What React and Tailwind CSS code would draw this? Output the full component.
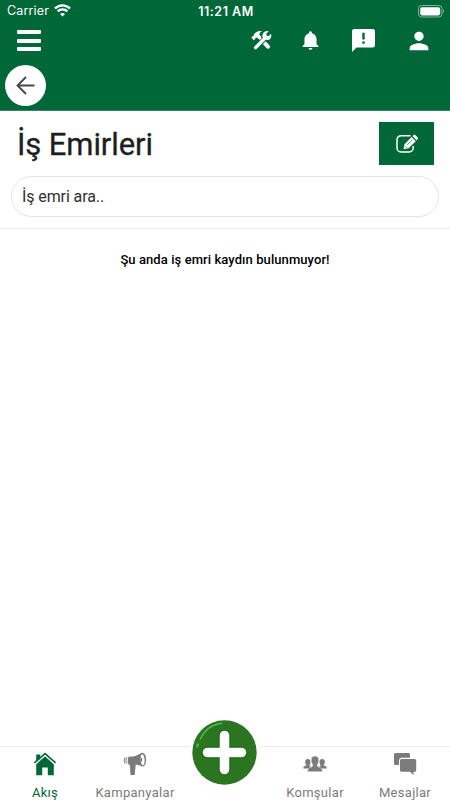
import React from 'react';
import { MdPerson } from 'react-icons/md';
import { IoMdNotifications } from 'react-icons/io';

const ToolsIcon = () => (
  <svg className="h-[21px] w-[21px]" viewBox="0 0 21 21" fill="none" stroke="currentColor">
    <path d="M6 5 17 16.500" strokeWidth="2.600" />
    <path d="M12.600 12.100 17 16.700" strokeWidth="4" strokeLinecap="round" />
    <path d="M9.600 12.900 12.900 9.600" strokeWidth="5" className="stroke-[#006838]" />
    <path d="M4.600 17.600 14.500 7.600" strokeWidth="3.400" strokeLinecap="round" />
    <path fill="currentColor" stroke="none" d="M17.700 1.300 15.300 3.800 15.700 5.800 17.600 6.100 20 3.700c.8 2.300.2 4.700-1.600 5.700-1.700 1-3.600.8-5.100-.1L11.600 7.400c-.6-2-.1-3.900 1.300-5.200 1.300-1.200 3.100-1.600 4.800-.9Z" />
    <path fill="currentColor" stroke="none" d="M11 1.200C8.700.600 6.300 1.100 4.700 2.500L2.900 4.300 2.700 5.900 1.500 6.200.200 7.500 2.900 10.300 4.200 9 4.500 7.700 5.700 7.400 7.600 9.100 10.200 6.500 8.400 4.700C8.300 2.900 9.400 1.800 11 1.200Z" />
  </svg>
);

const FeedbackIcon = () => (
  <svg className="h-[23px] w-[23px]" viewBox="0 0 23 23" fill="currentColor">
    <path d="M2.300 0h18.400A2.300 2.300 0 0 1 23 2.300v14a2.300 2.300 0 0 1-2.300 2.300H4.500L0 23V2.300A2.300 2.300 0 0 1 2.300 0Z" />
    <path d="M10.300 3.800h2.400v6.800h-2.400ZM10.300 12.400h2.400v2.400h-2.400Z" className="fill-[#006838]" />
  </svg>
);

const EditIcon = () => (
  <svg className="h-[20px] w-[24px]" viewBox="0 0 24 20" fill="none" stroke="currentColor">
    <path d="M15.500 1.700H6a4 4 0 0 0-4 4v8.200a4 4 0 0 0 4 4h8.200a4 4 0 0 0 4-4v-2" strokeWidth="1.500" />
    <path fill="currentColor" stroke="none" d="m16.600 3 4.200 4.200-7.300 7.100-5 1 1-5ZM17.500 2.200l1.100-1.100c.5-.5 1.200-.5 1.700 0l2.400 2.400c.5.5.5 1.200 0 1.700l-1.100 1.100Z" />
    <path d="m12.300 10.800 5.200-5.200M10.500 12.200l1.600 1.600" strokeWidth=".7" className="stroke-[#006838]" />
  </svg>
);

const HomeIcon = () => (
  <svg className="h-6 w-6" viewBox="0 0 24 24" fill="currentColor">
    <path d="M3.200 2.400h4v4L3.200 10Z" />
    <path d="M12 4.300 20.800 12.300V23.200h-6v-7.700H9.200v7.700h-6V12.300Z" />
    <path d="M1.400 10.900 12 1.600l10.600 9.300" fill="none" stroke="currentColor" strokeWidth="1.700" />
    <path d="M2.200 12.300 12 3.500l9.800 8.800" fill="none" stroke="white" strokeWidth=".7" />
  </svg>
);

const MegaphoneIcon = () => (
  <svg className="h-6 w-6" viewBox="0 0 24 24" fill="currentColor">
    <path d="M5.800 4.600C10.500 4.900 14.500 3.700 18.300 1c1.500-.8 3.300.1 4.200 2.800 1 3 .8 6.600-.5 9-.9 1.700-2.200 2.200-3.600 1.200-2.500-1-4.400-1.300-5.700-1.200l-1 10.200H7.500l-.6-10-1.100-.3C4.300 10.400 4.300 6.700 5.800 4.600Z" />
    <ellipse cx="19.600" cy="7.700" rx="2" ry="5.500" fill="white" transform="rotate(-4 19.600 7.700)" />
    <path d="M17.500 5.500c2.400.2 2.400 4.300.2 4.400Z" />
    <path d="M3.900 5.200c-1.400 1.700-1.400 4.900 0 6.600M2 5.700C.900 7.300.900 9.700 2 11.300" fill="none" stroke="currentColor" strokeWidth="1" />
  </svg>
);

const NeighboursIcon = () => (
  <svg className="h-6 w-6" viewBox="0 0 24 24" fill="currentColor">
    <path d="M4.500 7C6.500 6.800 7.700 8.200 7.500 10.200c-.1 1.300-.4 2-1 2.700l.1 1.100 2.100.9-2.400 1.600H.3c0-1.500.5-2 1.500-2.400 1.200-.4 1.700-.6 1.600-1.200-.8-.8-1.200-1.600-1.200-2.900C2.100 8.200 3 7.100 4.500 7Z" />
    <path d="M19.500 7C17.500 6.800 16.300 8.200 16.500 10.200c.1 1.300.4 2 1 2.700l-.1 1.100-2.100.9 2.400 1.600h6c0-1.500-.5-2-1.500-2.400-1.200-.4-1.700-.6-1.600-1.200.8-.8 1.200-1.600 1.200-2.900.1-1.800-.8-2.900-2.300-3Z" />
    <path d="M12 4c2.600 0 4 1.800 3.800 4.300-.1 2-.6 3.100-1.400 4.100 0 1.800.2 2.300 2 2.900 2 .7 2.900 1.300 3.100 4.500h-15c.2-3.200 1.100-3.800 3.100-4.500 1.800-.6 2-1.100 2-2.900-.8-1-1.300-2.100-1.400-4.100C8 5.800 9.400 4 12 4Z" stroke="white" strokeWidth=".5" />
  </svg>
);

const MessagesIcon = () => (
  <svg className="h-6 w-6" viewBox="0 0 24 24" fill="currentColor">
    <path d="M2.500 1h13a1.500 1.500 0 0 1 1.500 1.500v3.300H8.500A2.600 2.600 0 0 0 6 8.400v4.600H2.500A1.500 1.500 0 0 1 1 11.500v-9A1.500 1.500 0 0 1 2.500 1Z" />
    <path d="M8.500 7h13.200a1.500 1.500 0 0 1 1.500 1.500v9.800a1.500 1.500 0 0 1-1.500 1.500h-1.300v3.400l-3.300-3.400H8.500A1.500 1.500 0 0 1 7 18.300V8.500A1.500 1.500 0 0 1 8.500 7Z" />
  </svg>
);

const tabs = [
  { label: 'Akış', icon: HomeIcon, color: 'text-[#006838]' },
  { label: 'Kampanyalar', icon: MegaphoneIcon, color: 'text-[#7b7b7b]' },
  null,
  { label: 'Komşular', icon: NeighboursIcon, color: 'text-[#7b7b7b]' },
  { label: 'Mesajlar', icon: MessagesIcon, color: 'text-[#7b7b7b]' },
];

const StatusBar = () => (
  <div className="grid h-[22px] grid-cols-3 items-center pl-[7px] pr-[5px] font-['Inter',sans-serif] text-[12.500px] leading-none">
    <div className="flex items-center gap-[5px]">
      <span className="pt-px tracking-[0.15px]">Carrier</span>
      <svg className="-mt-px h-[13px] w-[17px]" viewBox="0 0 17 13" fill="none" stroke="currentColor" strokeWidth="2.400">
        <path d="M1 4.500c4.200-4.200 10.800-4.200 15 0M3.700 7.400c2.700-2.700 6.900-2.700 9.600 0" />
        <path d="M8.500 12.400 6 9.900c1.400-1.300 3.600-1.300 5 0Z" fill="currentColor" stroke="none" />
      </svg>
    </div>
    <span className="pt-[2px] text-center text-[12.500px] font-semibold tracking-[0.5px]">11:21 AM</span>
    <svg className="h-[13px] w-[27px] justify-self-end" viewBox="0 0 27 13" fill="none">
      <rect x=".5" y=".5" width="23.500" height="11.500" rx="3.200" stroke="white" strokeOpacity=".5" />
      <rect x="2.200" y="2.200" width="20" height="8.200" rx="1.800" fill="white" />
      <path d="M25.200 4.300c1.300.6 1.300 3.300 0 3.900Z" fill="white" fillOpacity=".5" />
    </svg>
  </div>
);

const App = () => (
  <div className="flex h-[800px] w-[450px] flex-col overflow-hidden bg-white font-['Roboto',sans-serif]">
    <header className="h-[111px] shrink-0 border-b border-[#3b8060] bg-[#006838] text-white">
      <StatusBar />
      <div className="flex h-[38px] items-center justify-between pl-[17px] pr-[17px]">
        <button className="-mt-px flex flex-col gap-[4.500px]" aria-label="Menu">
          <span className="h-1 w-6 rounded-[1px] bg-white" />
          <span className="h-1 w-6 rounded-[1px] bg-white" />
          <span className="h-1 w-6 rounded-[1px] bg-white" />
        </button>
        <div className="-mt-px flex items-center">
          <div className="mr-[27px] -mt-px"><ToolsIcon /></div>
          <IoMdNotifications className="mr-[30px] h-[23px] w-[23px]" />
          <div className="mr-[30px]"><FeedbackIcon /></div>
          <MdPerson className="h-[28px] w-[28px]" />
        </div>
      </div>
      <button className="ml-[5px] mt-[5px] flex h-[41px] w-[41px] items-center justify-center rounded-full bg-white text-[#484848]" aria-label="Back">
        <svg className="-mt-px h-5 w-5" viewBox="0 0 20 20" fill="none" stroke="currentColor" strokeWidth="1.900">
          <path d="M18.500 10.500H2M10 2 1.500 10.500 10 19" />
        </svg>
      </button>
    </header>

    <section className="h-[118px] shrink-0 border-b border-[#ebebeb] px-[11px] pt-[11px]">
      <div className="flex items-center justify-between pl-[6px] pr-[5px]">
        <h1 className="pt-[3px] text-[31px] leading-[40px] tracking-[-0.1px] text-[#1d1e1f] [-webkit-text-stroke:0.3px]">İş Emirleri</h1>
        <button className="flex h-[43px] w-[55px] items-center justify-center bg-[#006838] text-white" aria-label="Edit">
          <EditIcon />
        </button>
      </div>
      <input
        className="mt-[11px] h-[41px] w-full rounded-full border border-[#e4e4e4] pl-[10px] pr-[11px] text-[16px] tracking-[-0.1px] text-black outline-none placeholder:text-[#303030]"
        placeholder="İş emri ara.."
      />
    </section>

    <main className="flex-1 pt-[22px]">
      <p className="text-center text-[13px] font-medium leading-[18px] tracking-[0.08px] text-black">Şu anda iş emri kaydın bulunmuyor!</p>
    </main>

    <nav className="relative grid h-[54px] shrink-0 grid-cols-5 border-t border-[#ececec]">
      {tabs.map((tab, i) => tab ? (
        <div key={tab.label} className={`flex flex-col items-center pt-[5px] ${tab.color}`}>
          <tab.icon />
          <span className="mt-[8px] text-[13px] leading-[18px] tracking-[0.3px]">{tab.label}</span>
        </div>
      ) : <div key={i} />)}
      <button className="absolute left-[189px] top-[-30px] flex h-[71px] w-[71px] items-center justify-center rounded-full bg-white" aria-label="Add">
        <svg className="h-[65px] w-[65px]" viewBox="0 0 65 65" fill="none" strokeLinecap="round">
          <circle cx="32.500" cy="32.500" r="32.200" fill="#2b7520" />
          <path d="M32.500 15.500v34M15.500 32.500h34" stroke="#12680e" strokeWidth="11.500" />
          <path d="M32.500 15.500v34M15.500 32.500h34" stroke="white" strokeWidth="9.600" />
          <path d="M8.200 19C12.500 10 20 4.500 29.500 3.200" stroke="#50b848" strokeWidth="1.500" />
          <path d="M5 27.500 6 23.500" stroke="#50b848" strokeWidth="2.200" strokeLinecap="butt" />
        </svg>
      </button>
    </nav>
  </div>
);

export default App;
